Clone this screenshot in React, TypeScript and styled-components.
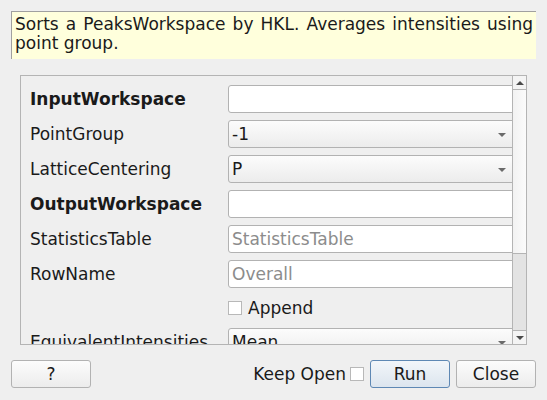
import React from "react";
import styled, { createGlobalStyle } from "styled-components";

const Global = createGlobalStyle`
  html, body { margin: 0; padding: 0; background: #efefef; }
  body { font-family: "DejaVu Sans", sans-serif; font-size: 17px; color: #1a1a1a; }
  * { box-sizing: border-box; }
`;

const Dialog = styled.div`
  width: 547px;
  height: 400px;
  padding: 11px 11px 12px;
  display: flex;
  flex-direction: column;
  background: #efefef;
  overflow: hidden;
`;

const Description = styled.div`
  height: 48px;
  background: #ffffdc;
  border-top: 1px solid #a0a0a0;
  border-left: 1px solid #a0a0a0;
  padding: 3px 3px 5px 3px;
  line-height: 19px;
  text-align: justify;
`;

const ScrollArea = styled.div`
  margin: 16px 9px 0;
  height: 270px;
  border: 1px solid #b4b4b4;
  display: flex;
`;

const Viewport = styled.div`
  flex: 1;
  overflow: hidden;
  position: relative;
`;

const Form = styled.div`
  width: 504px;
  padding: 9px 9px 0 9px;
  display: grid;
  grid-template-columns: 198px 288px;
  grid-template-rows: repeat(6, 28px) 26px 28px;
  row-gap: 7px;
  align-items: center;
`;

const Label = styled.div<{ $bold?: boolean }>`
  font-weight: ${(p) => (p.$bold ? "bold" : "normal")};
  white-space: nowrap;
  line-height: 28px;
`;

const TextField = styled.div<{ $placeholder?: boolean }>`
  height: 28px;
  border: 1px solid #b2b2b2;
  border-radius: 3px;
  background: #ffffff;
  padding: 0 3px;
  line-height: 26px;
  color: ${(p) => (p.$placeholder ? "#8c8c8c" : "#1a1a1a")};
  white-space: nowrap;
  overflow: hidden;
`;

const Combo = styled.div`
  height: 28px;
  border: 1px solid #b2b2b2;
  border-radius: 3px;
  background: linear-gradient(#fcfcfc, #ececec);
  padding: 0 3px;
  line-height: 26px;
  display: flex;
  align-items: center;
  justify-content: space-between;
`;

const ComboArrow = styled.span`
  width: 0;
  height: 0;
  margin-right: 6px;
  margin-top: 2px;
  border-left: 4px solid transparent;
  border-right: 4px solid transparent;
  border-top: 4px solid #6a6a6a;
`;

const CheckRow = styled.div`
  display: flex;
  align-items: center;
  gap: 6px;
`;

const CheckBox = styled.span`
  width: 14px;
  height: 14px;
  border: 1px solid #b8b8b8;
  background: #ffffff;
  display: inline-block;
  flex: none;
`;

const ScrollBar = styled.div`
  width: 14px;
  border-left: 1px solid #b4b4b4;
  display: flex;
  flex-direction: column;
  background: #e3e3e3;
`;

const ScrollButton = styled.div<{ $down?: boolean }>`
  height: 14px;
  background: #f4f4f4;
  ${(p) => (p.$down ? "border-top: 1px solid #b4b4b4;" : "border-bottom: 1px solid #b4b4b4;")}
  display: flex;
  align-items: center;
  justify-content: center;
`;

const ScrollTri = styled.span<{ $down?: boolean }>`
  width: 0;
  height: 0;
  border-left: 4px solid transparent;
  border-right: 4px solid transparent;
  ${(p) => (p.$down ? "border-top: 4px solid #4a4a4a;" : "border-bottom: 4px solid #4a4a4a;")}
`;

const Handle = styled.div`
  height: 164px;
  background: linear-gradient(90deg, #f2f2f2, #fbfbfb);
  border-bottom: 1px solid #b4b4b4;
`;

const Track = styled.div`
  flex: 1;
`;

const Footer = styled.div`
  margin-top: 15px;
  height: 28px;
  display: flex;
  align-items: center;
`;

const Button = styled.button<{ $default?: boolean }>`
  width: 80px;
  height: 28px;
  font-family: "DejaVu Sans", sans-serif;
  font-size: 17px;
  color: #1a1a1a;
  border-radius: 3px;
  border: 1px solid ${(p) => (p.$default ? "#5e88b4" : "#b2b2b2")};
  background: ${(p) =>
    p.$default ? "linear-gradient(#f2f6fa, #dce5ee)" : "linear-gradient(#fcfcfc, #ececec)"};
  padding: 0;
`;

const Spacer = styled.div`
  flex: 1;
`;

const KeepOpen = styled.div`
  display: flex;
  align-items: center;
  gap: 4px;
  margin-right: 6px;
`;

const ButtonGroup = styled.div`
  display: flex;
  gap: 6px;
`;

export default function App() {
  return (
    <>
      <Global />
      <Dialog>
        <Description>
          Sorts a PeaksWorkspace by HKL. Averages intensities using point group.
        </Description>
        <ScrollArea>
          <Viewport>
            <Form>
              <Label $bold>InputWorkspace</Label>
              <TextField />
              <Label>PointGroup</Label>
              <Combo>
                <span>-1</span>
                <ComboArrow />
              </Combo>
              <Label>LatticeCentering</Label>
              <Combo>
                <span>P</span>
                <ComboArrow />
              </Combo>
              <Label $bold>OutputWorkspace</Label>
              <TextField />
              <Label>StatisticsTable</Label>
              <TextField $placeholder>StatisticsTable</TextField>
              <Label>RowName</Label>
              <TextField $placeholder>Overall</TextField>
              <div />
              <CheckRow>
                <CheckBox />
                <span>Append</span>
              </CheckRow>
              <Label>EquivalentIntensities</Label>
              <Combo>
                <span>Mean</span>
                <ComboArrow />
              </Combo>
            </Form>
          </Viewport>
          <ScrollBar>
            <ScrollButton>
              <ScrollTri />
            </ScrollButton>
            <Handle />
            <Track />
            <ScrollButton $down>
              <ScrollTri $down />
            </ScrollButton>
          </ScrollBar>
        </ScrollArea>
        <Footer>
          <Button>?</Button>
          <Spacer />
          <KeepOpen>
            <span>Keep Open</span>
            <CheckBox />
          </KeepOpen>
          <ButtonGroup>
            <Button $default>Run</Button>
            <Button>Close</Button>
          </ButtonGroup>
        </Footer>
      </Dialog>
    </>
  );
}
